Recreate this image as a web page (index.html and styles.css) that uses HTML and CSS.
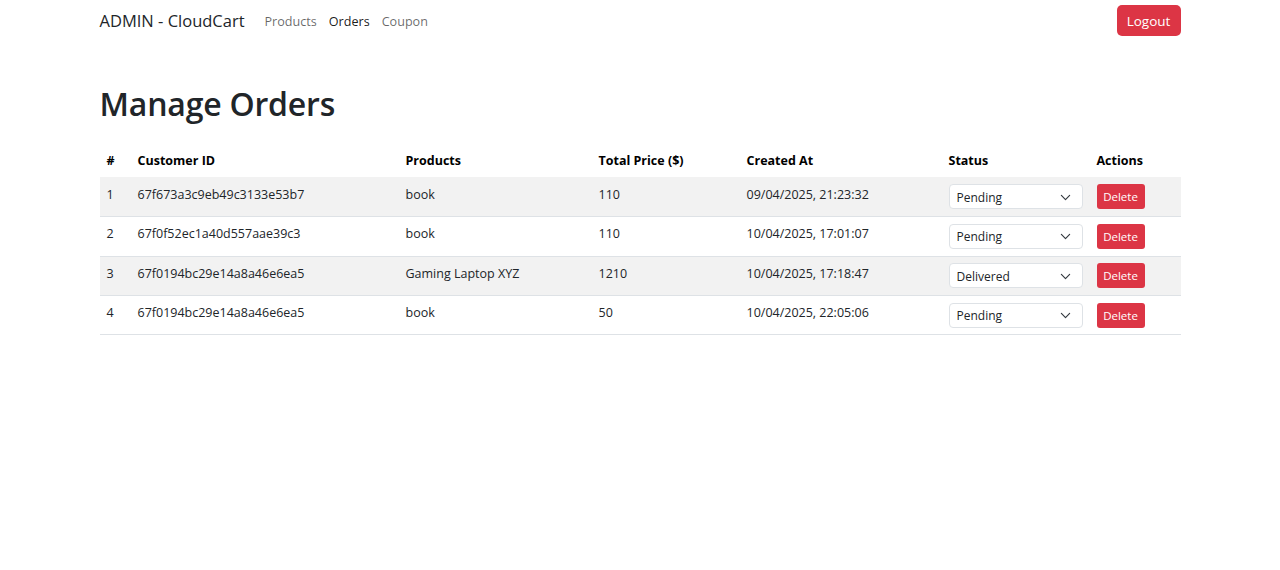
FILE: index.html
```html
<!DOCTYPE html>
<html lang="en">
<head>
<meta charset="utf-8">
<title>ADMIN - CloudCart</title>
<link rel="stylesheet" href="styles.css">
</head>
<body>
<nav class="navbar">
  <div class="container nav-inner">
    <div class="nav-left">
      <a class="brand" href="#">ADMIN - CloudCart</a>
      <a class="nav-link" href="#">Products</a>
      <a class="nav-link active" href="#">Orders</a>
      <a class="nav-link" href="#">Coupon</a>
    </div>
    <button class="btn-logout">Logout</button>
  </div>
</nav>
<main class="container">
  <h1 class="title">Manage Orders</h1>
  <table class="orders">
    <thead>
      <tr>
        <th class="c-num">#</th>
        <th class="c-cust">Customer ID</th>
        <th class="c-prod">Products</th>
        <th class="c-price">Total Price ($)</th>
        <th class="c-date">Created At</th>
        <th class="c-status">Status</th>
        <th class="c-act">Actions</th>
      </tr>
    </thead>
    <tbody>
      <tr>
        <td>1</td><td>67f673a3c9eb49c3133e53b7</td><td>book</td><td>110</td><td>09/04/2025, 21:23:32</td>
        <td class="ctl"><div class="select"><span>Pending</span><svg class="chev" viewBox="0 0 16 16" width="11" height="11"><path d="M2 5l6 6 6-6" fill="none" stroke="#343a40" stroke-width="1.7" stroke-linecap="round" stroke-linejoin="round"/></svg></div></td>
        <td class="ctl"><button class="btn-del">Delete</button></td>
      </tr>
      <tr>
        <td>2</td><td>67f0f52ec1a40d557aae39c3</td><td>book</td><td>110</td><td>10/04/2025, 17:01:07</td>
        <td class="ctl"><div class="select"><span>Pending</span><svg class="chev" viewBox="0 0 16 16" width="11" height="11"><path d="M2 5l6 6 6-6" fill="none" stroke="#343a40" stroke-width="1.7" stroke-linecap="round" stroke-linejoin="round"/></svg></div></td>
        <td class="ctl"><button class="btn-del">Delete</button></td>
      </tr>
      <tr>
        <td>3</td><td>67f0194bc29e14a8a46e6ea5</td><td>Gaming Laptop XYZ</td><td>1210</td><td>10/04/2025, 17:18:47</td>
        <td class="ctl"><div class="select"><span>Delivered</span><svg class="chev" viewBox="0 0 16 16" width="11" height="11"><path d="M2 5l6 6 6-6" fill="none" stroke="#343a40" stroke-width="1.7" stroke-linecap="round" stroke-linejoin="round"/></svg></div></td>
        <td class="ctl"><button class="btn-del">Delete</button></td>
      </tr>
      <tr>
        <td>4</td><td>67f0194bc29e14a8a46e6ea5</td><td>book</td><td>50</td><td>10/04/2025, 22:05:06</td>
        <td class="ctl"><div class="select"><span>Pending</span><svg class="chev" viewBox="0 0 16 16" width="11" height="11"><path d="M2 5l6 6 6-6" fill="none" stroke="#343a40" stroke-width="1.7" stroke-linecap="round" stroke-linejoin="round"/></svg></div></td>
        <td class="ctl"><button class="btn-del">Delete</button></td>
      </tr>
    </tbody>
  </table>
</main>
</body>
</html>
```

FILE: styles.css
```css
* { box-sizing: border-box; }
body {
  margin: 0;
  font-family: "Open Sans", "Noto Sans", sans-serif;
  color: #212529;
  background: #fff;
}
.container {
  width: 1081px;
  margin: 0 auto;
}
.navbar {
  padding: 5px 0;
}
.nav-inner {
  display: flex;
  align-items: center;
  justify-content: space-between;
}
.nav-left {
  display: flex;
  align-items: center;
  gap: 12px;
}
.brand {
  font-size: 16.5px;
  color: #212529;
  text-decoration: none;
  margin-right: 8px;
}
.nav-link {
  font-size: 12.6px;
  color: rgba(0,0,0,0.6);
  text-decoration: none;
  padding-top: 1px;
}
.nav-link.active {
  color: rgba(0,0,0,0.9);
}
.btn-logout {
  font-family: inherit;
  font-size: 13.5px;
  color: #fff;
  background: #dc3545;
  border: none;
  border-radius: 5px;
  width: 64px;
  height: 31px;
  padding: 0;
}
.title {
  font-size: 32px;
  font-weight: 600;
  line-height: 1.2;
  margin: 44px 0 21px;
  letter-spacing: -0.2px;
}
.orders {
  width: 100%;
  border-collapse: collapse;
  font-size: 12.5px;
}
.orders th {
  text-align: left;
  font-weight: 700;
  color: #000;
  padding: 7px;
  height: 33px;
}
.orders td {
  padding: 0 7px 5px;
  height: 39.4px;
  border-bottom: 1px solid #dee2e6;
  color: #212529;
}
.orders td.ctl {
  padding: 0 7px;
}
.orders tbody tr:nth-child(odd) td {
  background: #f2f2f2;
}
.c-num { width: 31px; }
.c-cust { width: 268px; }
.c-prod { width: 193px; }
.c-price { width: 148px; }
.c-date { width: 202px; }
.c-status { width: 148px; }
.select {
  width: 134px;
  height: 25px;
  background: #fff;
  border: 1px solid #dee2e6;
  border-radius: 4px;
  display: flex;
  align-items: center;
  justify-content: space-between;
  padding: 1px 11px 0 7px;
  font-size: 12px;
}
.btn-del {
  font-family: inherit;
  font-size: 11.5px;
  color: #fff;
  background: #dc3545;
  border: none;
  border-radius: 3px;
  width: 48px;
  height: 25px;
  padding: 0;
}
```
